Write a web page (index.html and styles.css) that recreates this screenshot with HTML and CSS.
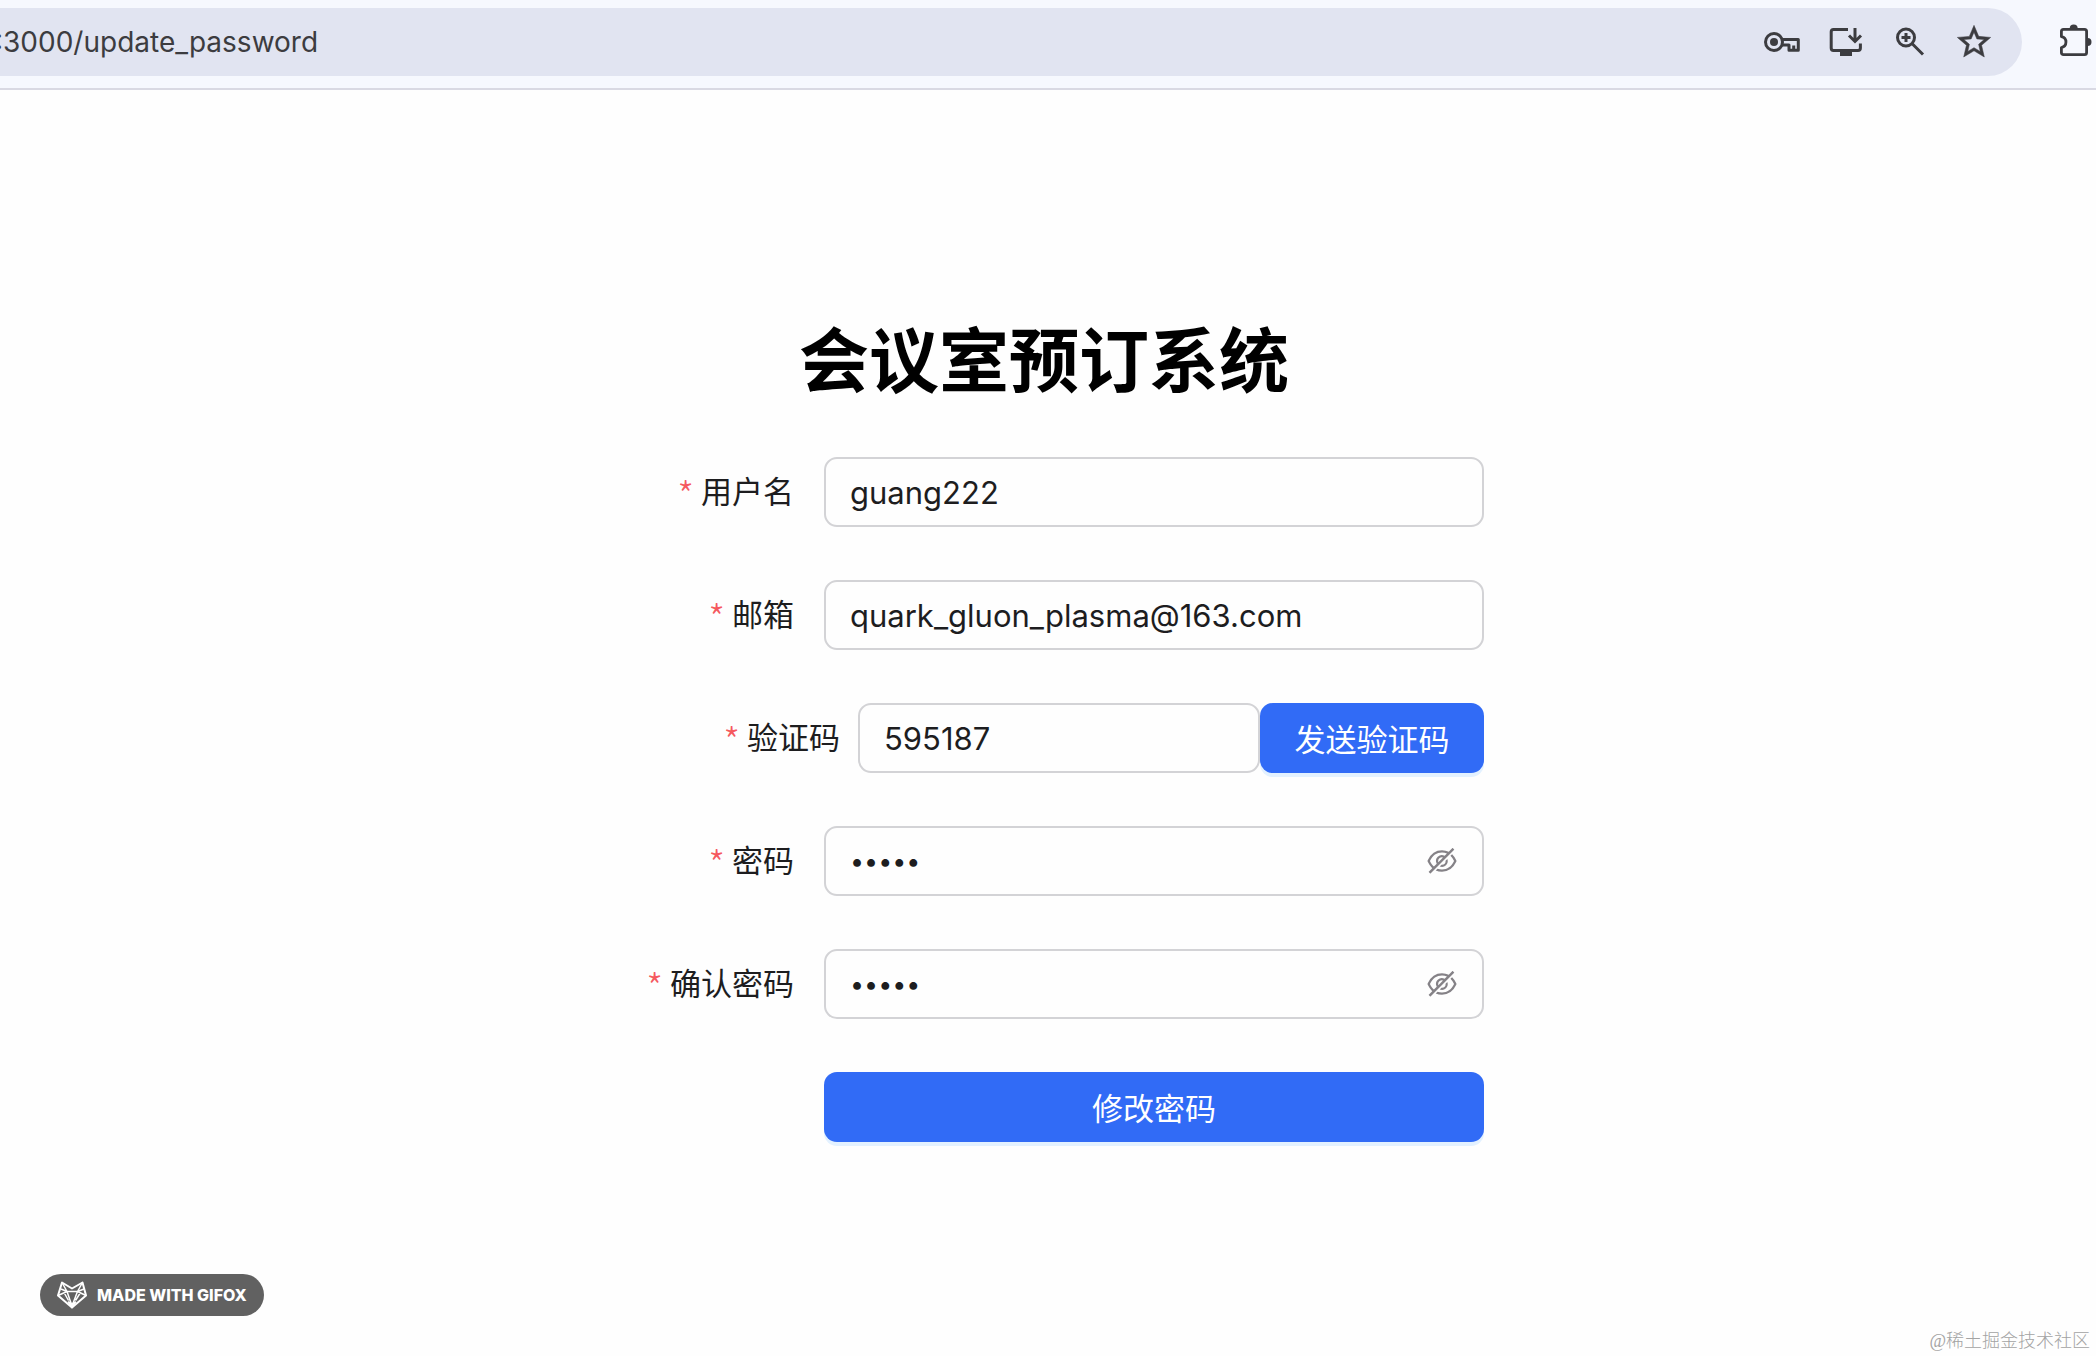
FILE: index.html
```html
<!DOCTYPE html>
<html lang="zh-CN">
<head>
<meta charset="utf-8">
<meta name="viewport" content="width=device-width, initial-scale=1">
<title>会议室预订系统</title>
<link rel="stylesheet" href="styles.css">
</head>
<body>
<header class="toolbar">
  <div class="omnibox">
    <span class="url">:3000/update_password</span>
    <button class="tool" type="button" aria-label="Passwords">
      <svg viewBox="0 0 40 40" fill="none" stroke="currentColor" stroke-width="3" stroke-linejoin="round"><circle cx="12" cy="20" r="8.5"/><circle cx="12" cy="20" r="4" fill="currentColor" stroke="none"/><path d="M19.5 17.5H36.3V28.3H27V23H20.5M31.7 23.5V28"/></svg>
    </button>
    <button class="tool" type="button" aria-label="Install app">
      <svg viewBox="0 0 40 40" fill="none" stroke="currentColor" stroke-width="3"><path d="M22 7.5H7.5Q5.2 7.5 5.2 9.8V26Q5.2 28.5 7.5 28.5H32Q34.4 28.5 34.4 26V21.5M29 6V19M23 13.5L29 19.5L35 13.5"/><path d="M14 29H26V34H14z" fill="currentColor" stroke="none"/></svg>
    </button>
    <button class="tool" type="button" aria-label="Zoom">
      <svg viewBox="0 0 40 40" fill="none" stroke="currentColor" stroke-width="3"><circle cx="16" cy="15.5" r="8.5"/><path d="M22 21.5L33 32.5M16 11V20M11.500 15.500H20.500"/></svg>
    </button>
    <button class="tool" type="button" aria-label="Bookmark">
      <svg viewBox="0 0 24 24" fill="currentColor" stroke="currentColor" stroke-width=".3"><path d="M22 9.240l-7.190-.620L12 2 9.190 8.630 2 9.240l5.460 4.730L5.820 21 12 17.270 18.180 21l-1.630-7.030L22 9.240zM12 15.400l-3.760 2.270 1-4.280-3.320-2.880 4.380-.380L12 6.100l1.710 4.040 4.380.380-3.320 2.880 1 4.280L12 15.400z"/></svg>
    </button>
  </div>
  <button class="tool" type="button" aria-label="Extensions">
    <svg viewBox="0 0 40 40" fill="none" stroke="currentColor" stroke-width="2.800" stroke-linejoin="round"><path d="M7.500 7.400H28.500Q30.600 7.400 30.600 9.500V30.500Q30.600 32.600 28.500 32.600H7.500Q5.400 32.600 5.400 30.500V25.500A5.600 5.600 0 0 0 5.400 14.500V9.500Q5.400 7.400 7.500 7.400Z"/><path d="M13.700 6.500a4 4 0 0 1 8 0zM31.500 16a4 4 0 0 1 0 8z" fill="currentColor" stroke="none"/></svg>
  </button>
</header>

<main class="page">
  <form class="form">
    <h1 class="title">会议室预订系统</h1>
    <div class="row">
      <label class="label" for="username">用户名</label>
      <div class="field"><input class="input" id="username" type="text" value="guang222" required></div>
    </div>
    <div class="row">
      <label class="label" for="email">邮箱</label>
      <div class="field"><input class="input" id="email" type="text" value="quark_gluon_plasma@163.com" required></div>
    </div>
    <div class="row row-captcha">
      <label class="label" for="captcha">验证码</label>
      <div class="captcha">
        <input class="input" id="captcha" type="text" value="595187" required>
        <button class="button" type="button">发送验证码</button>
      </div>
    </div>
    <div class="row">
      <label class="label" for="password">密码</label>
      <div class="field">
        <input class="input input-password" id="password" type="password" value="guang" required>
        <button class="eye" type="button" aria-label="显示密码"><svg viewBox="0 0 1024 1024" fill="currentColor"><path d="M942.2 486.2Q889.470 375.110 816.700 305l-50.880 50.880C807.310 395.530 843.450 447.400 874.700 512 791.500 684.200 673.400 766 512 766q-72.670 0-133.870-22.380L323 798.750Q408 838 512 838q288.300 0 430.200-300.300a60.290 60.290 0 000-51.500zm-63.570-320.640L836 122.880a8 8 0 00-11.320 0L715.310 232.200Q624.860 186 512 186q-288.300 0-430.200 300.300a60.300 60.300 0 000 51.500q56.690 119.400 136.500 191.410L112.480 835a8 8 0 000 11.310L155.170 889a8 8 0 0011.310 0l712.150-712.120a8 8 0 000-11.320zM149.300 512C232.600 339.800 350.700 258 512 258c54.540 0 104.130 9.360 149.120 28.390l-70.300 70.300a176 176 0 00-238.130 238.130l-83.420 83.420C223.100 637.490 183.300 582.280 149.300 512zm246.700 0a112.110 112.110 0 01146.200-106.690L401.310 546.200A112 112 0 01396 512z"/><path d="M508 624c-3.460 0-6.870-.160-10.250-.470l-52.820 52.820a176.090 176.090 0 00227.420-227.420l-52.820 52.820c.310 3.380.470 6.790.470 10.250a111.940 111.940 0 01-112 112z"/></svg></button>
      </div>
    </div>
    <div class="row">
      <label class="label" for="confirm">确认密码</label>
      <div class="field">
        <input class="input input-password" id="confirm" type="password" value="guang" required>
        <button class="eye" type="button" aria-label="显示密码"><svg viewBox="0 0 1024 1024" fill="currentColor"><path d="M942.2 486.2Q889.470 375.110 816.700 305l-50.880 50.880C807.310 395.530 843.450 447.400 874.700 512 791.500 684.200 673.400 766 512 766q-72.670 0-133.870-22.380L323 798.750Q408 838 512 838q288.300 0 430.200-300.300a60.290 60.290 0 000-51.500zm-63.570-320.640L836 122.880a8 8 0 00-11.320 0L715.310 232.200Q624.860 186 512 186q-288.300 0-430.200 300.300a60.300 60.300 0 000 51.500q56.690 119.400 136.500 191.410L112.480 835a8 8 0 000 11.310L155.170 889a8 8 0 0011.310 0l712.150-712.120a8 8 0 000-11.320zM149.300 512C232.600 339.800 350.700 258 512 258c54.540 0 104.130 9.360 149.120 28.390l-70.300 70.300a176 176 0 00-238.130 238.130l-83.420 83.420C223.100 637.490 183.300 582.280 149.300 512zm246.700 0a112.110 112.110 0 01146.200-106.690L401.310 546.200A112 112 0 01396 512z"/><path d="M508 624c-3.460 0-6.870-.160-10.250-.470l-52.820 52.820a176.090 176.090 0 00227.420-227.420l-52.820 52.820c.310 3.380.470 6.790.470 10.250a111.940 111.940 0 01-112 112z"/></svg></button>
      </div>
    </div>
    <div class="row row-submit">
      <button class="button" type="submit">修改密码</button>
    </div>
  </form>
</main>

<div class="badge">
  <svg class="fox" viewBox="0 0 30 28" fill="none" stroke="currentColor" stroke-width="1.500" stroke-linejoin="round"><path d="M5 1.500L1 14.500L15 26.500L29 14.500L25.500 1.500L15 7.500Z" stroke-width="2"/><path d="M5 1.500L10 10.500H20.500L25.500 1.500M1 14.500L10 10.500L15 25L20.500 10.500L29 14.500M4 8L10 10.500M27 8L20.500 10.500M7 11.500L11.500 19.500M23.500 11.500L18.500 19.500"/><path d="M11.500 21L15 23L18.500 21L15 26.500Z" fill="currentColor"/></svg>
  <span>MADE WITH GIFOX</span>
</div>
<div class="credit">@稀土掘金技术社区</div>
</body>
</html>
```
FILE: styles.css
```css
* {
  box-sizing: border-box;
}

body {
  margin: 0;
  min-height: 100vh;
  position: relative;
  background: #fefefe;
  color: #1d1d1f;
  font-family: Inter, "Noto Sans CJK SC", sans-serif;
  font-size: 31px;
}

button,
input {
  font: inherit;
}

svg {
  display: block;
  width: 100%;
  height: 100%;
}

.toolbar {
  display: flex;
  align-items: center;
  gap: 34px;
  padding: 8px 0 12px;
  background: #f6f8fe;
  border-bottom: 2px solid #d9d9e3;
  color: #3c3c40;
}

.omnibox {
  flex: 1;
  display: flex;
  align-items: center;
  gap: 24px;
  height: 68px;
  padding-right: 28px;
  background: #e1e4f1;
  border-radius: 0 34px 34px 0;
}

.url {
  flex: 1;
  margin-left: -5px;
  font-size: 28px;
}

.tool {
  flex: none;
  width: 40px;
  height: 40px;
  padding: 0;
  border: 0;
  background: none;
  color: inherit;
}

.page {
  display: flex;
  justify-content: center;
  padding: 230px 8px 200px 0;
}

.form {
  display: flex;
  flex-direction: column;
  gap: 53px;
  width: 880px;
}

.title {
  margin: 0;
  color: #000;
  font-size: 70px;
  font-weight: 700;
  line-height: 84px;
  text-align: center;
}

.row {
  display: grid;
  grid-template-columns: 190px 660px;
  column-gap: 30px;
  align-items: center;
}

.row-captcha {
  grid-template-columns: 236px 626px;
  column-gap: 18px;
}

.captcha {
  display: grid;
  grid-template-columns: 402px 224px;
}

.label {
  text-align: right;
  white-space: nowrap;
  line-height: 48px;
}

.label::before {
  content: "*";
  margin-right: 7px;
  color: #f5595e;
  font-family: "Noto Sans CJK SC", sans-serif;
  font-size: 38px;
  font-weight: 300;
  line-height: 1;
  vertical-align: -7px;
}

.field {
  position: relative;
}

.input {
  display: block;
  width: 100%;
  height: 70px;
  padding: 0 24px;
  border: 2px solid #d3d3d6;
  border-radius: 13px;
  background: #fefefe;
  color: inherit;
  outline: none;
}

.input-password {
  font-size: 25px;
}

.eye {
  position: absolute;
  top: 18px;
  right: 25px;
  width: 34px;
  height: 34px;
  padding: 0;
  border: 0;
  background: none;
  color: #858287;
}

.button {
  height: 70px;
  padding: 0 0 2px;
  border: 0;
  border-radius: 13px;
  background: #316bf6;
  box-shadow: 0 4px 0 #e3f1ff;
  color: #fff;
}

.row-submit .button {
  grid-column: 2;
}

.badge {
  position: absolute;
  left: 40px;
  bottom: 40px;
  display: flex;
  align-items: center;
  gap: 10px;
  height: 42px;
  padding: 0 17px;
  border-radius: 21px;
  background: #616161;
  color: #fff;
  font-size: 16px;
  font-weight: 800;
}

.fox {
  width: 30px;
  height: 28px;
}

.credit {
  position: absolute;
  right: 6px;
  bottom: 3px;
  color: #a3a3a3;
  font-family: "Liberation Serif", "Noto Sans CJK SC", serif;
  font-size: 18px;
  font-weight: 300;
  line-height: 24px;
}
```
